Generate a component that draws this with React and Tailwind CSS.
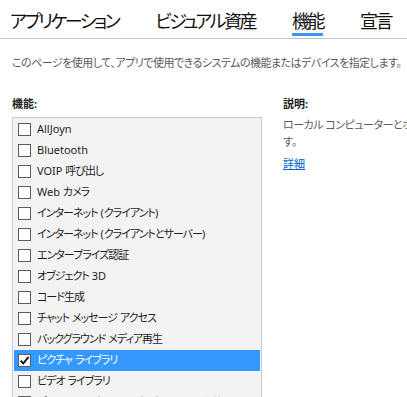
import React from 'react';

const tabs = [
  { label: 'アプリケーション', active: false },
  { label: 'ビジュアル資産', active: false },
  { label: '機能', active: true },
  { label: '宣言', active: false },
];

const caps = [
  { label: 'AllJoyn' },
  { label: 'Bluetooth' },
  { label: 'VOIP 呼び出し' },
  { label: 'Web カメラ' },
  { label: 'インターネット (クライアント)' },
  { label: 'インターネット (クライアントとサーバー)' },
  { label: 'エンタープライズ認証' },
  { label: 'オブジェクト 3D' },
  { label: 'コード生成' },
  { label: 'チャット メッセージ アクセス' },
  { label: 'バックグラウンド メディア再生' },
  { label: 'ピクチャ ライブラリ', checked: true, selected: true },
  { label: 'ビデオ ライブラリ' },
  { label: 'プライベート ネットワーク (クライアントとサーバー)' },
];

// Japanese runs get a slightly tighter tracking so they sit closer to the UI font widths
const Jp = ({ text }) =>
  text.split(/([\u3000-\u9fff\uff00-\uffef]+)/).map((part, i) =>
    /[\u3000-\u9fff\uff00-\uffef]/.test(part) ? (
      <span key={i} className="tracking-[-1px]">{part}</span>
    ) : (
      <span key={i}>{part}</span>
    )
  );

const Check = ({ checked }) => (
  <span className="w-[13px] h-[13px] shrink-0 border border-[#5c5c5c] bg-white flex items-center justify-center">
    {checked && (
      <svg width="11" height="11" viewBox="0 0 11 11">
        <path d="M1.6 5.6 L4.3 8.4 L9.6 1.8" fill="none" stroke="#111" strokeWidth="1.9" />
      </svg>
    )}
  </span>
);

const App = () => {
  return (
    <div className="w-[407px] h-[397px] overflow-hidden bg-white text-[#1e1e1e] font-['Noto_Sans','Noto_Sans_CJK_JP',sans-serif] [font-feature-settings:'palt']">
      {/* Tabs */}
      <div className="flex items-end gap-[37px] pl-[10px] h-[39px] border-b border-[#c4c4c4] whitespace-nowrap">
        {tabs.map((t) => (
          <div key={t.label} className="flex flex-col items-stretch">
            <span className="text-[18px] leading-[24px] tracking-[-2.5px] text-[#111]">{t.label}</span>
            <span className={`h-[3px] mb-[2px] ${t.active ? 'bg-[#3c96f5]' : 'bg-transparent'}`} />
          </div>
        ))}
      </div>

      {/* Intro */}
      <p className="pl-[12px] mt-[15px] text-[11px] leading-[18px] tracking-[-0.5px] text-[#5a5a5a] whitespace-nowrap">
        このページを使用して、アプリで使用できるシステムの機能またはデバイスを指定します。
      </p>

      <div className="flex mt-[24px] pl-[12px]">
        {/* Capabilities */}
        <div className="w-[250px] shrink-0">
          <div className="text-[11px] leading-[16px] font-bold text-[#1e1e1e] mb-[5px]">機能:</div>
          <div className="border border-[#c9c9d8] bg-[#f3f3f3] pt-[1px] px-[1px]">
            {caps.map((c) => (
              <div
                key={c.label}
                className={`h-[21px] flex items-center gap-[6px] pl-[4px] text-[11px] whitespace-nowrap overflow-hidden ${
                  c.selected ? 'bg-[#3399ff] text-white' : 'text-[#1e1e1e]'
                }`}
              >
                <Check checked={c.checked} />
                <span><Jp text={c.label} /></span>
              </div>
            ))}
          </div>
        </div>

        {/* Description */}
        <div className="ml-[21px] min-w-0 overflow-hidden">
          <div className="text-[11px] leading-[16px] font-bold text-[#1e1e1e] mb-[4px]">説明:</div>
          <div className="text-[11px] leading-[17px] tracking-[-0.5px] text-[#5a5a5a] whitespace-nowrap">
            ローカル コンピューターとホーム ネットワーク上のピクチャ ライブラリにアクセスできま
          </div>
          <div className="text-[11px] leading-[17px] text-[#5a5a5a]">す。</div>
          <a href="#" className="inline-block mt-[3px] text-[11px] leading-[17px] text-[#0066cc] underline">
            詳細
          </a>
        </div>
      </div>
    </div>
  );
};

export default App;
